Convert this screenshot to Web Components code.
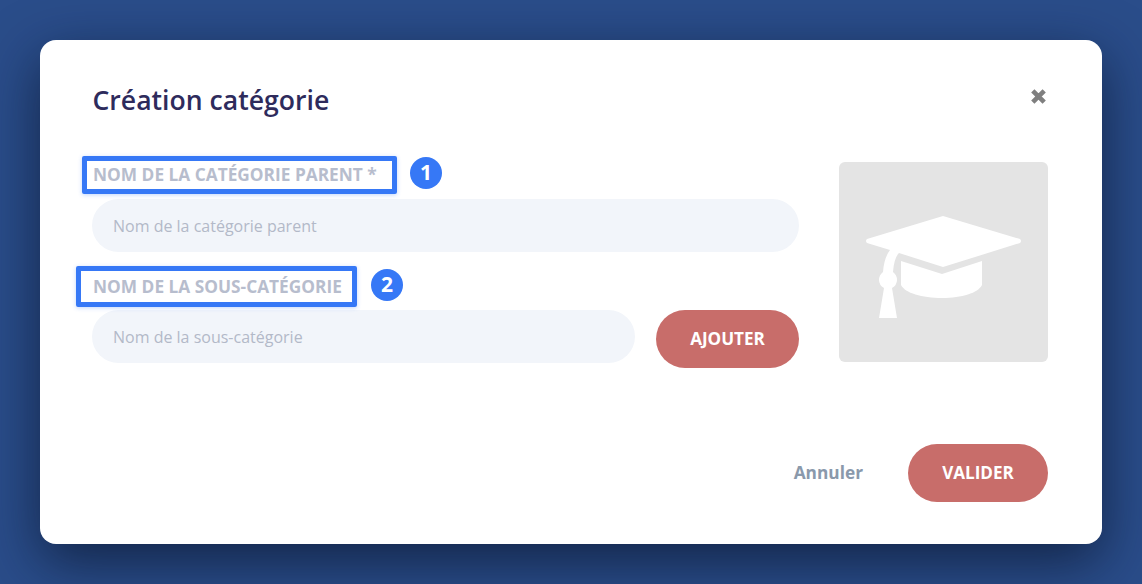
<!DOCTYPE html>
<html lang="fr">
<head>
<meta charset="utf-8">
<title>Création catégorie</title>
<style>
    html, body {
        margin: 0;
        height: 584px;
        overflow: hidden;
    }

    body {
        background: #2a4d8a;
        font-family: "Open Sans", "Noto Sans", sans-serif;
    }
</style>
</head>
<body>
<category-modal>
    <span slot="title">Création catégorie</span>

    <field-row number="1" label-gap="11" box="-6 -20 -6 -11" badge-left="317">
        <span slot="label">Nom de la catégorie parent *</span>
        <text-box>Nom de la catégorie parent</text-box>
    </field-row>

    <field-row number="2" label-gap="10" box="-8 -15 -7 -17" badge-left="278">
        <span slot="label">Nom de la sous-catégorie</span>
        <text-box>Nom de la sous-catégorie</text-box>
        <pill-button slot="action">Ajouter</pill-button>
    </field-row>

    <cap-picture slot="picture"></cap-picture>

    <a slot="footer" style="font-weight:700;font-size:17.3px;line-height:24px;padding-top:1px;padding-bottom:1px;color:#8a99ab">Annuler</a>
    <pill-button slot="footer" wide>Valider</pill-button>
</category-modal>

<script>
class CategoryModal extends HTMLElement {
    constructor() {
        super();
        this.attachShadow({ mode: "open" });
        this.shadowRoot.innerHTML = `
        <style>
            :host {
                display: flex;
                flex-direction: column;
                box-sizing: border-box;
                width: 1062px;
                height: 504px;
                margin: 40px;
                padding: 42px 54px 42px 53px;
                background: #fff;
                border-radius: 16px;
                box-shadow: 0 18px 56px rgba(8, 18, 40, .68);
            }
            header {
                display: flex;
                justify-content: space-between;
                align-items: flex-start;
                height: 80px;
            }
            h1 {
                margin: 0 0 0 -.5px;
                font-size: 26.6px;
                line-height: 36px;
                font-weight: 600;
                color: #2e2b5c;
            }
            svg {
                margin: 5.500px 1.500px 0 0;
            }
            main {
                display: flex;
                justify-content: space-between;
                height: 282px;
            }
            .fields {
                display: flex;
                flex-direction: column;
                gap: 22px;
                width: 707px;
                margin-left: -1px;
            }
            footer {
                display: flex;
                justify-content: flex-end;
                align-items: center;
                gap: 45px;
            }
        </style>
        <header>
            <h1><slot name="title"></slot></h1>
            <svg width="17" height="17" viewBox="0 0 17 17">
                <path d="M2.800 2.800l11.400 11.400M14.200 2.800l-11.400 11.400" stroke="#7f7f7f" stroke-width="4.600" fill="none"/>
            </svg>
        </header>
        <main>
            <div class="fields"><slot></slot></div>
            <slot name="picture"></slot>
        </main>
        <footer><slot name="footer"></slot></footer>
        `;
    }
}

class FieldRow extends HTMLElement {
    constructor() {
        super();
        this.attachShadow({ mode: "open" });
    }

    connectedCallback() {
        const box = this.getAttribute("box").split(" ");
        const badgeLeft = this.getAttribute("badge-left");

        this.shadowRoot.innerHTML = `
        <style>
            :host {
                display: block;
            }
            label {
                position: relative;
                display: block;
                width: max-content;
                margin: 0 0 ${this.getAttribute("label-gap")}px 1px;
                font-size: 17.3px;
                line-height: 26px;
                font-weight: 700;
                text-transform: uppercase;
                color: #b7bdcd;
            }
            /* numbered annotation drawn over the label */
            .box {
                position: absolute;
                top: ${box[0]}px;
                right: ${box[1]}px;
                bottom: ${box[2]}px;
                left: ${box[3]}px;
                border: 5px solid #3678f6;
                border-radius: 2px;
                box-shadow: 0 1px 4px rgba(54, 120, 246, .3);
            }
            .badge {
                position: absolute;
                top: -5px;
                left: ${badgeLeft}px;
                width: 32px;
                height: 32px;
                border-radius: 50%;
                background: #3678f6;
                color: #fff;
                font-size: 21px;
                line-height: 31px;
                font-weight: 700;
                text-align: center;
            }
            .row {
                display: flex;
                gap: 21px;
                align-items: flex-start;
            }
        </style>
        <label>
            <slot name="label"></slot>
            <span class="box"></span>
            <span class="badge">${this.getAttribute("number")}</span>
        </label>
        <div class="row">
            <slot></slot>
            <slot name="action"></slot>
        </div>
        `;
    }
}

class TextBox extends HTMLElement {
    constructor() {
        super();
        this.attachShadow({ mode: "open" });
        this.shadowRoot.innerHTML = `
        <style>
            :host {
                display: flex;
                flex: 1;
                align-items: center;
                box-sizing: border-box;
                height: 53px;
                padding: 0 21px;
                border-radius: 27px;
                background: #f2f5fa;
                color: #b3b9c8;
                font-size: 16px;
            }
        </style>
        <slot></slot>
        `;
    }
}

class PillButton extends HTMLElement {
    constructor() {
        super();
        this.attachShadow({ mode: "open" });
        this.shadowRoot.innerHTML = `
        <style>
            :host {
                display: flex;
                align-items: center;
                justify-content: center;
                box-sizing: border-box;
                width: 143px;
                height: 58px;
                padding-bottom: 2px;
                border-radius: 29px;
                background: #c86d6a;
                color: #fff;
                font-size: 17.100px;
                font-weight: 700;
                text-transform: uppercase;
            }
            :host([wide]) {
                width: 140px;
            }
        </style>
        <slot></slot>
        `;
    }
}

class CapPicture extends HTMLElement {
    constructor() {
        super();
        this.attachShadow({ mode: "open" });
        this.shadowRoot.innerHTML = `
        <style>
            :host {
                display: block;
                width: 209px;
                height: 200px;
                border-radius: 6px;
                background: #e4e4e4;
            }
            svg {
                display: block;
            }
        </style>
        <svg width="209" height="200" viewBox="839 162 209 200" fill="#fff">
            <path d="M943 216 1020 239Q1022 241 1020 243L943 267 899 253Q894 258 893 272 897 275 897 280 897 285 892 288L897 318H879L884 288Q879 285 879 280 879 275 883 272 884 258 890 250L867 243Q865 241 867 239Z"/>
            <path d="M901 261 942 274 982 261V285C978 293 962 298 942 298 922 298 905 293 901 285Z"/>
        </svg>
        `;
    }
}

customElements.define('category-modal', CategoryModal);
customElements.define('field-row', FieldRow);
customElements.define('text-box', TextBox);
customElements.define('pill-button', PillButton);
customElements.define('cap-picture', CapPicture);
</script>
</body>
</html>
